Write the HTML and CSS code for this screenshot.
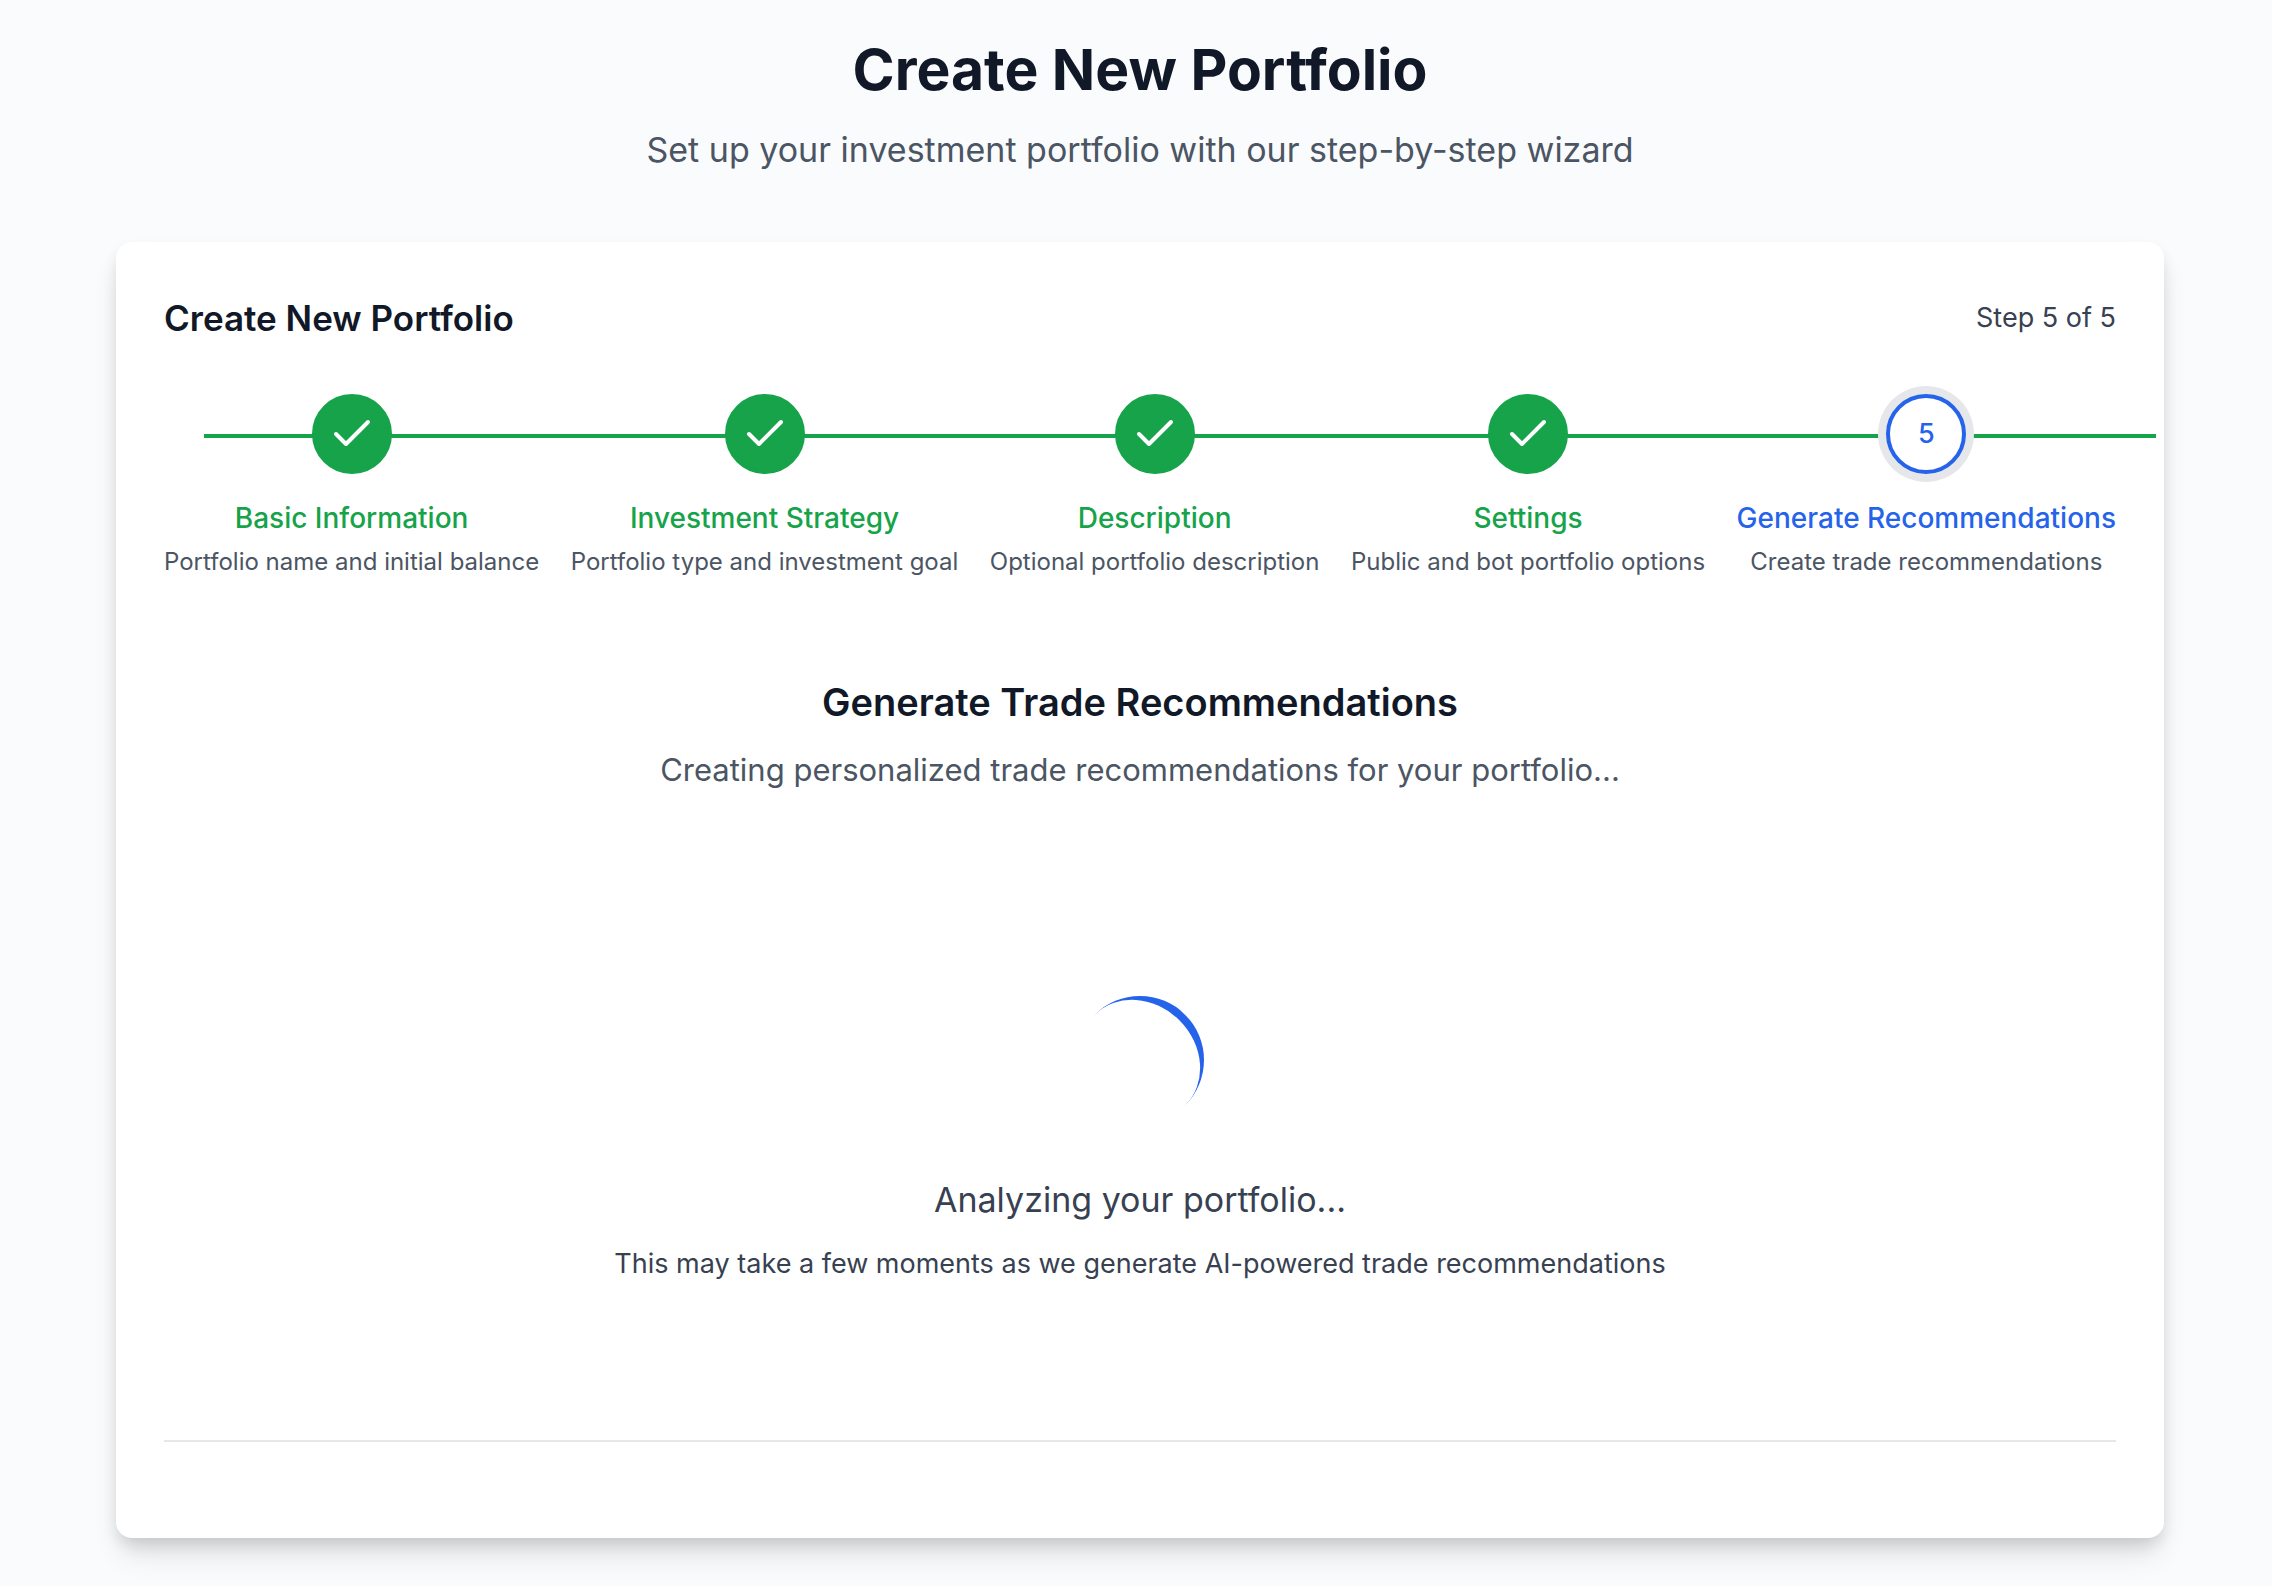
FILE: index.html
```html
<!DOCTYPE html>
<html lang="en">
	<head>
		<meta charset="utf-8" />
		<meta name="viewport" content="width=device-width, initial-scale=1" />
		<title>Create New Portfolio</title>
		<link rel="stylesheet" href="styles.css">
	</head>
	<body>
		<svg class="sprite" aria-hidden="true">
			<symbol id="check" viewBox="0 0 24 24">
				<path d="M20 6 9 17l-5-5" fill="none" stroke="currentColor" stroke-width="2" stroke-linecap="round" stroke-linejoin="round" />
			</symbol>
		</svg>

		<header class="page-head">
			<h1>Create New Portfolio</h1>
			<p>Set up your investment portfolio with our step-by-step wizard</p>
		</header>

		<main class="card">
			<div class="card-head">
				<h2>Create New Portfolio</h2>
				<span>Step 5 of 5</span>
			</div>

			<ol class="steps">
				<li class="step done">
					<span class="dot"><svg><use href="#check" /></svg></span>
					<span class="name">Basic Information</span>
					<span class="desc">Portfolio name and initial balance</span>
				</li>
				<li class="step done">
					<span class="dot"><svg><use href="#check" /></svg></span>
					<span class="name">Investment Strategy</span>
					<span class="desc">Portfolio type and investment goal</span>
				</li>
				<li class="step done">
					<span class="dot"><svg><use href="#check" /></svg></span>
					<span class="name">Description</span>
					<span class="desc">Optional portfolio description</span>
				</li>
				<li class="step done">
					<span class="dot"><svg><use href="#check" /></svg></span>
					<span class="name">Settings</span>
					<span class="desc">Public and bot portfolio options</span>
				</li>
				<li class="step current" aria-current="step">
					<span class="dot">5</span>
					<span class="name">Generate Recommendations</span>
					<span class="desc">Create trade recommendations</span>
				</li>
			</ol>

			<section class="generate">
				<h3>Generate Trade Recommendations</h3>
				<p>Creating personalized trade recommendations for your portfolio...</p>
			</section>

			<div class="loading" role="status">
				<div class="spinner"></div>
				<p class="loading-title">Analyzing your portfolio...</p>
				<p class="loading-note">This may take a few moments as we generate AI-powered trade recommendations</p>
			</div>

			<footer class="card-foot"></footer>
		</main>
	</body>
</html>
```

FILE: styles.css
```css
* { box-sizing: border-box; }
body {
	margin: 0;
	padding: 34px 48px 48px 56px;
	background: #fafbfd;
	color: #111827;
	font-family: Inter, "Liberation Sans", sans-serif;
	font-size: 27px;
	line-height: 40px;
}
h1, h2, h3, p, ol { margin: 0; padding: 0; }
.sprite { display: none; }

.page-head { text-align: center; margin-bottom: 64px; }
.page-head h1 { font-size: 57px; line-height: 72px; font-weight: 700; }
.page-head p {
	margin-top: 16px;
	font-size: 34px;
	line-height: 56px;
	color: #4b5563;
}

.card {
	max-width: 2048px;
	margin: 0 auto;
	padding: 48px 48px 0;
	background: #fff;
	border-radius: 16px;
	box-shadow: 0 20px 30px -6px rgba(0,0,0,0.12), 0 8px 16px -2px rgba(0,0,0,0.12);
}
.card-head {
	display: flex;
	justify-content: space-between;
	align-items: center;
	margin-bottom: 48px;
	color: #374151;
}
.card-head h2 { font-size: 35px; line-height: 56px; font-weight: 600; color: #111827; }

/* stepper */
.steps {
	position: relative;
	display: flex;
	justify-content: space-between;
	list-style: none;
	margin-bottom: 96px;
}
.steps::before {
	content: '';
	position: absolute; top: 40px; left: 40px;
	width: 100%; height: 4px;
	background: #16a34a;
}
.step {
	position: relative;
	display: flex;
	flex-direction: column;
	align-items: center;
	white-space: nowrap;
}
.dot {
	display: flex;
	align-items: center;
	justify-content: center;
	width: 80px; height: 80px;
	margin-bottom: 24px;
	border: 4px solid #16a34a;
	border-radius: 50%;
	background: #16a34a;
	color: #fff;
	font-weight: 500;
}
.dot svg { width: 48px; height: 48px; }
.name { font-size: 28px; font-weight: 500; color: #16a34a; }
.desc { margin-top: 8px; font-size: 24px; line-height: 32px; color: #4b5563; }
.current .dot {
	border-color: #2563eb;
	background: #fff;
	box-shadow: 0 0 0 8px #e5e7eb;
}
.current .dot, .current .name { color: #2563eb; }

.generate { text-align: center; margin-bottom: 48px; }
.generate h3 { font-size: 38px; line-height: 56px; font-weight: 600; }
.generate p { margin-top: 16px; font-size: 31px; line-height: 48px; color: #4b5563; }

.loading {
	display: flex;
	flex-direction: column;
	align-items: center;
	padding: 154px 0 156px;
	text-align: center;
	color: #374151;
}
.spinner {
	width: 128px; height: 128px;
	margin-bottom: 48px;
	border-top: 8px solid #2563eb;
	border-radius: 50%;
	transform: rotate(45deg);
}
.loading-title { margin-bottom: 16px; font-size: 34px; line-height: 56px; }

.card-foot { height: 98px; border-top: 2px solid #e5e7eb; }
```
